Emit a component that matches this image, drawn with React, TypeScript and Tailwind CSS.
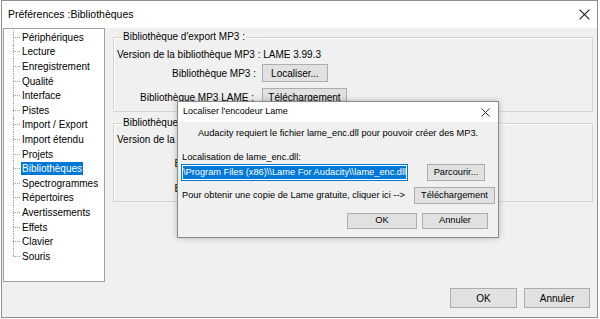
import React from 'react'

const treeItems = [
  'Périphériques',
  'Lecture',
  'Enregistrement',
  'Qualité',
  'Interface',
  'Pistes',
  'Import / Export',
  'Import étendu',
  'Projets',
  'Bibliothèques',
  'Spectrogrammes',
  'Répertoires',
  'Avertissements',
  'Effets',
  'Clavier',
  'Souris',
]

const dllPath = String.raw`\Program Files (x86)\\Lame For Audacity\\lame_enc.dll`

function CloseIcon({ size }: { size: number }) {
  return (
    <svg width={size} height={size} viewBox="0 0 10 10" className="block">
      <path d="M0.5 0.5 L9.5 9.5 M9.5 0.5 L0.5 9.5" stroke="#1a1a1a" strokeWidth="1" fill="none" />
    </svg>
  )
}

function WinButton({ label, className }: { label: string; className: string }) {
  return (
    <button className={`flex items-center justify-center border border-[#adadad] bg-[#e1e1e1] text-black ${className}`}>
      {label}
    </button>
  )
}

export default function App() {
  return (
    <div className="relative h-[319px] w-[600px] overflow-hidden bg-white font-['Liberation_Sans',Arial,sans-serif] text-[10px] text-black">
      {/* Preferences window */}
      <div className="ml-[1px] flex h-[318px] w-[597px] flex-col border border-[#8f8f8f]">
        <div className="flex h-[27px] items-center justify-between bg-white pl-[6px] pr-[7px]">
          <span className="text-[10.5px]">Préférences :Bibliothèques</span>
          <CloseIcon size={11} />
        </div>

        <div className="flex flex-1 flex-col bg-[#f0f0f0]">
          <div className="flex">
            {/* Tree */}
            <div className="ml-[1px] h-[254px] w-[102px] border border-[#a0a0a0] bg-white pt-[1px]">
              {treeItems.map((item, i) => {
                const last = i === treeItems.length - 1
                const selected = item === 'Bibliothèques'
                return (
                  <div key={item} className="flex h-[14.6px] items-stretch">
                    <div className="ml-[9px] flex w-[7px] flex-col">
                      <div className="flex-1 border-l border-dotted border-[#a0a0a0]" />
                      <div
                        className={
                          last
                            ? 'flex-1 border-t border-dotted border-[#a0a0a0]'
                            : 'flex-1 border-l border-t border-dotted border-[#a0a0a0]'
                        }
                      />
                    </div>
                    <div className="flex items-center">
                      <span
                        className={
                          selected
                            ? 'ml-[1px] bg-[#0078d7] px-[1px] leading-[13px] text-white'
                            : 'ml-[1px] px-[1px] leading-[13px]'
                        }
                      >
                        {item}
                      </span>
                    </div>
                  </div>
                )
              })}
            </div>

            {/* Right panel */}
            <div className="ml-[8px] flex w-[480px] flex-col">
              <fieldset className="mt-[2px] border border-[#d5d5d5] pb-[5px] pl-[3px] shadow-[inset_1px_1px_0_#ffffff]">
                <legend className="ml-[5px] px-[1px] leading-[14px]">Bibliothèque d'export MP3 :</legend>
                <div className="mt-[4px] leading-[14px]">Version de la bibliothèque MP3 : LAME 3.99.3</div>
                <div className="mt-[2px] flex h-[18px] items-center">
                  <span className="w-[139px] text-right">Bibliothèque MP3 :</span>
                  <WinButton label="Localiser..." className="ml-[6px] h-[18px] w-[66px]" />
                </div>
                <div className="mt-[6px] flex h-[18px] items-center">
                  <span className="w-[137px] text-right">Bibliothèque MP3 LAME :</span>
                  <WinButton label="Téléchargement" className="ml-[8px] h-[18px] w-[85px]" />
                </div>
              </fieldset>

              <fieldset className="mt-[4px] border border-[#d5d5d5] pb-[4px] pl-[3px] shadow-[inset_1px_1px_0_#ffffff]">
                <legend className="ml-[5px] px-[1px] leading-[14px]">Bibliothèque d'import/export FFmpeg :</legend>
                <div className="mt-[3px] leading-[14px]">Version de la bibliothèque FFmpeg : F(55.33.100)</div>
                <div className="mt-[7px] flex h-[18px] items-center">
                  <span className="w-[158px] text-right">Bibliothèque FFmpeg :</span>
                  <WinButton label="Localiser..." className="ml-[6px] h-[18px] w-[66px]" />
                </div>
                <div className="mt-[7px] flex h-[18px] items-center">
                  <span className="w-[158px] text-right">Bibliothèque FFmpeg :</span>
                  <WinButton label="Téléchargement" className="ml-[6px] h-[18px] w-[85px]" />
                </div>
              </fieldset>
            </div>
          </div>

          <div className="mt-[6px] flex justify-end gap-[7px] pr-[7px]">
            <WinButton label="OK" className="h-[20px] w-[67px]" />
            <WinButton label="Annuler" className="h-[20px] w-[66px]" />
          </div>
        </div>
      </div>

      {/* Locate Lame dialog */}
      <div className="absolute left-[177px] top-[101px] flex h-[137px] w-[322px] flex-col border border-[#8a8a8a] bg-[#f0f0f0] text-[9.25px] shadow-[0_0_6px_rgba(0,0,0,0.25)]">
        <div className="flex h-[20px] items-center justify-between bg-white pl-[5px] pr-[8px]">
          <span className="text-[9px]">Localiser l'encodeur Lame</span>
          <CloseIcon size={9} />
        </div>
        <div className="flex flex-1 flex-col">
          <div className="mt-[5px] text-center leading-[12px]">
            Audacity requiert le fichier lame_enc.dll pour pouvoir créer des MP3.
          </div>
          <div className="mt-[12px] pl-[4px] leading-[12px]">Localisation de lame_enc.dll:</div>
          <div className="mt-[1px] flex items-center pl-[3px]">
            <div className="flex h-[17px] w-[227px] items-center overflow-hidden border border-[#0078d7] bg-white pl-[1px]">
              <span className="whitespace-pre bg-[#0078d7] leading-[13px] text-white">{dllPath}</span>
            </div>
            <WinButton label="Parcourir..." className="ml-[19px] h-[17px] w-[58px]" />
          </div>
          <div className="mt-[6px] flex items-center justify-between pl-[4px] pr-[3px]">
            <span>Pour obtenir une copie de Lame gratuite, cliquer ici --&gt;</span>
            <WinButton label="Téléchargement" className="h-[17px] w-[81px]" />
          </div>
          <div className="mt-[9px] flex justify-end gap-[5px] pr-[10px]">
            <WinButton label="OK" className="h-[16px] w-[70px]" />
            <WinButton label="Annuler" className="h-[16px] w-[66px]" />
          </div>
        </div>
      </div>
    </div>
  )
}
